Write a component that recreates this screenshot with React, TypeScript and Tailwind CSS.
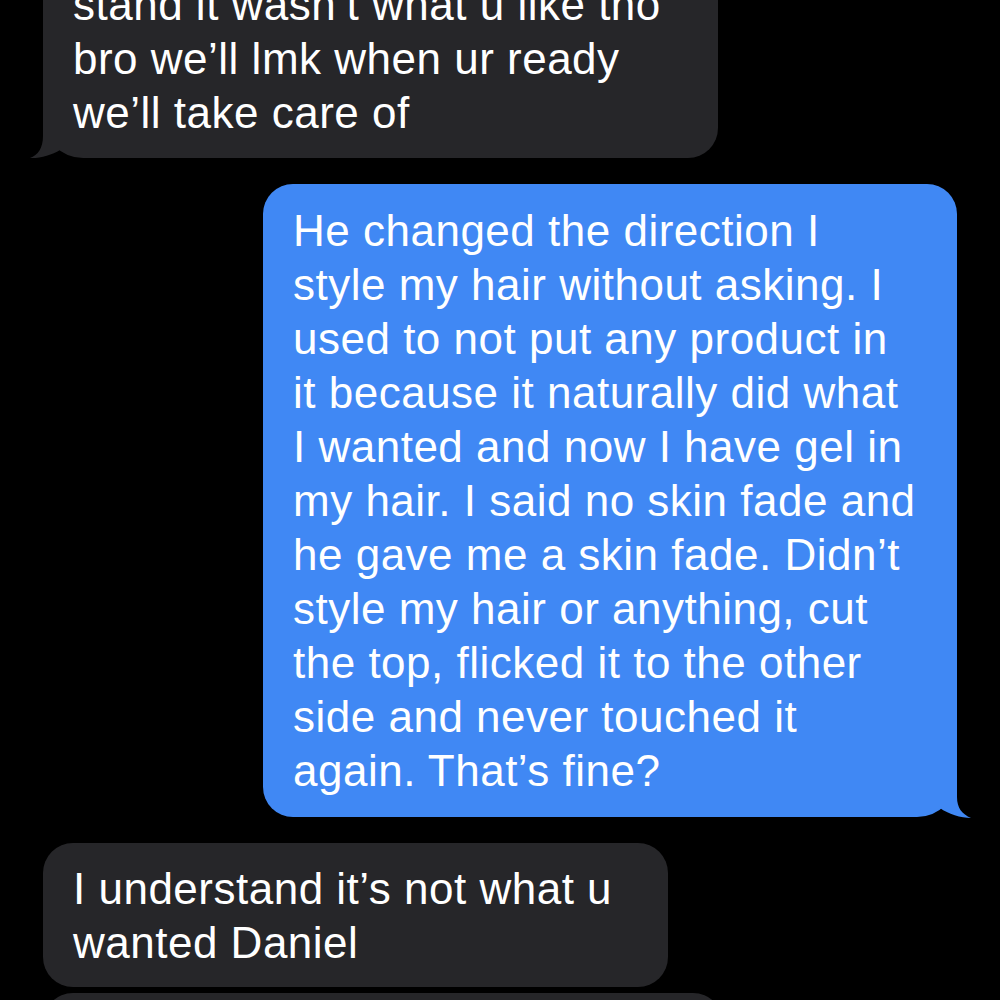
import React from "react";

const font = { fontFamily: '"Liberation Sans", Arial, sans-serif' };

function LeftTail() {
  return (
    <svg
      className="absolute left-[-16px] bottom-[-2px]"
      width="36"
      height="42"
      viewBox="-16 -40 36 42"
    >
      <path
        d="M 0 -40 L 0 -22 C 0 -10 -5 -3 -13 0 C -3 0.5 9 -3 17 -8 L 17 -40 Z"
        fill="#262629"
      />
    </svg>
  );
}

function RightTail() {
  return (
    <svg
      className="absolute right-[-16px] bottom-[-2px]"
      width="36"
      height="42"
      viewBox="-20 -40 36 42"
    >
      <path
        d="M 0 -40 L 0 -20 C 0 -9 5 -3 14 1 C 4 1 -9 -3 -17 -9 L -17 -40 Z"
        fill="#4088f4"
      />
    </svg>
  );
}

function Lines({ lines }: { lines: string[] }) {
  return (
    <>
      {lines.map((l, i) => (
        <div key={i} className="whitespace-nowrap">
          {l}
        </div>
      ))}
    </>
  );
}

export default function App() {
  return (
    <div
      className="w-[1000px] h-[1000px] overflow-hidden bg-black text-white text-[44px] leading-[54px] tracking-[0.5px]"
      style={font}
    >
      <div className="flex flex-col mt-[-41px]">
        <div className="relative ml-[43px] w-[675px] bg-[#262629] rounded-[30px] rounded-bl-[40px] pl-[30px] pt-[19px] pb-[18px]">
          <Lines
            lines={[
              "stand it wasn\u2019t what u like tho",
              "bro we\u2019ll lmk when ur ready",
              "we\u2019ll take care of",
            ]}
          />
          <LeftTail />
        </div>

        <div className="relative mt-[26px] ml-[263px] w-[694px] bg-[#4088f4] rounded-[30px] rounded-br-[40px] pl-[30px] pt-[20px] pb-[19px]">
          <Lines
            lines={[
              "He changed the direction I",
              "style my hair without asking. I",
              "used to not put any product in",
              "it because it naturally did what",
              "I wanted and now I have gel in",
              "my hair. I said no skin fade and",
              "he gave me a skin fade. Didn\u2019t",
              "style my hair or anything, cut",
              "the top, flicked it to the other",
              "side and never touched it",
              "again. That\u2019s fine?",
            ]}
          />
          <RightTail />
        </div>

        <div className="relative mt-[26px] ml-[43px] w-[625px] bg-[#262629] rounded-[30px] pl-[30px] pt-[19px] pb-[17px]">
          <Lines
            lines={["I understand it\u2019s not what u", "wanted Daniel"]}
          />
        </div>

        <div className="relative mt-[6px] ml-[43px] w-[680px] h-[120px] bg-[#262629] rounded-[30px]" />
      </div>
    </div>
  );
}
